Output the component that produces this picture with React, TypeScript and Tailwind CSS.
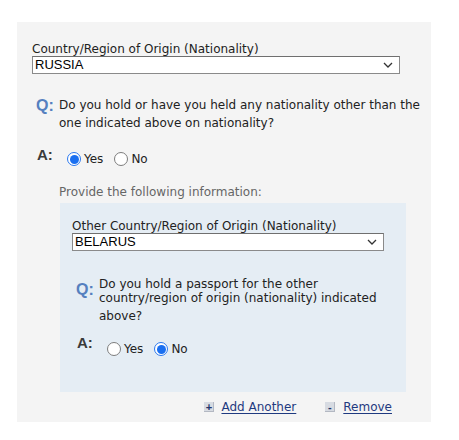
import React from 'react';

const font = { fontFamily: '"DejaVu Sans", Verdana, sans-serif' };

function Chevron() {
  return (
    <svg width="10" height="6" viewBox="0 0 10 6" className="shrink-0">
      <path d="M1 1 L5 5 L9 1" fill="none" stroke="#333" strokeWidth="1.3" />
    </svg>
  );
}

function Select({ value, width }: { value: string; width: string }) {
  return (
    <div
      className={`${width} h-[18px] bg-white border border-[#8a8a8a] border-t-[#6f6f6f] flex items-center justify-between pl-[2px] pr-[6px]`}
    >
      <span className="text-[13px] leading-[16px] text-black font-['Liberation_Sans',Arial,sans-serif]">
        {value}
      </span>
      <Chevron />
    </div>
  );
}

function Radio({ checked }: { checked?: boolean }) {
  if (checked) {
    return (
      <span className="w-[14px] h-[14px] rounded-full border border-[#2a78f0] bg-white flex items-center justify-center shrink-0">
        <span className="w-[9px] h-[9px] rounded-full bg-[#1a6ff0]" />
      </span>
    );
  }
  return <span className="block w-[14px] h-[14px] rounded-full border border-[#7d7d7d] bg-white shrink-0" />;
}

function RadioGroup({ value }: { value: 'yes' | 'no' }) {
  return (
    <div className="flex items-center text-[12px] leading-[14px] text-[#222]">
      <Radio checked={value === 'yes'} />
      <span className="ml-[3px]">Yes</span>
      <span className="ml-[11px] flex">
        <Radio checked={value === 'no'} />
      </span>
      <span className="ml-[3px]">No</span>
    </div>
  );
}

function QLabel({ top }: { top: string }) {
  return (
    <span
      className={`${top} block w-[23px] shrink-0 text-[16px] leading-[18px] font-bold text-[#5580bf] font-['Liberation_Sans',Arial,sans-serif]`}
    >
      Q:
    </span>
  );
}

function ALabel() {
  return (
    <span className="block w-[30px] shrink-0 text-[15px] leading-[18px] font-bold text-[#3a3a3a] font-['Liberation_Sans',Arial,sans-serif]">
      A:
    </span>
  );
}

function LinkIcon({ sign }: { sign: string }) {
  return (
    <span className="w-[10px] h-[10px] bg-[#d7dbe2] border-r border-b border-[#b3b8c2] flex items-center justify-center text-[11px] leading-[10px] font-bold text-[#23356b] font-['Liberation_Sans',Arial,sans-serif]">
      {sign}
    </span>
  );
}

export default function App() {
  return (
    <div className="w-[459px] h-[440px] bg-white pt-[22px] pl-[17px]" style={font}>
      <div className="w-[414px] h-[400px] bg-[#f4f4f4] pl-[15px] pt-[20px] text-[#222]">
        <div className="text-[12px] leading-[14px] whitespace-nowrap">Country/Region of Origin (Nationality)</div>
        <Select value="RUSSIA" width="w-[368px]" />

        {/* first question */}
        <div className="flex mt-[22px] ml-[4px]">
          <QLabel top="pt-[1px]" />
          <div className="text-[12px] leading-[18px] whitespace-nowrap">
            Do you hold or have you held any nationality other than the
            <br />
            one indicated above on nationality?
          </div>
        </div>

        <div className="flex h-[20px] mt-[14px] ml-[5px]">
          <ALabel />
          <div className="mt-[6px]">
            <RadioGroup value="yes" />
          </div>
        </div>

        <div className="mt-[19px] ml-[27px] text-[12px] leading-[14px] text-[#666]">
          Provide the following information:
        </div>

        {/* nested block */}
        <div className="mt-[4px] ml-[28px] w-[346px] h-[189px] bg-[#e5edf4] pl-[12px] pt-[17px]">
          <div className="text-[12px] leading-[13px] whitespace-nowrap">
            Other Country/Region of Origin (Nationality)
          </div>
          <Select value="BELARUS" width="w-[312px]" />

          <div className="flex mt-[26px] ml-[4px]">
            <QLabel top="pt-[4px]" />
            <div className="text-[12px] whitespace-nowrap">
              <div className="leading-[14px]">Do you hold a passport for the other</div>
              <div className="leading-[14px]">country/region of origin (nationality) indicated</div>
              <div className="leading-[18px] mt-[2px]">above?</div>
            </div>
          </div>

          <div className="flex mt-[9px] ml-[5px]">
            <ALabel />
            <div className="mt-[8px]">
              <RadioGroup value="no" />
            </div>
          </div>
        </div>

        <div className="flex justify-end items-center pr-[39px] mt-[8px] text-[12px] leading-[14px]">
          <LinkIcon sign="+" />
          <a className="ml-[7px] text-[#1f3a80] underline underline-offset-2">Add Another</a>
          <span className="ml-[29px]">
            <LinkIcon sign="-" />
          </span>
          <a className="ml-[8px] text-[#1f3a80] underline underline-offset-2">Remove</a>
        </div>
      </div>
    </div>
  );
}
